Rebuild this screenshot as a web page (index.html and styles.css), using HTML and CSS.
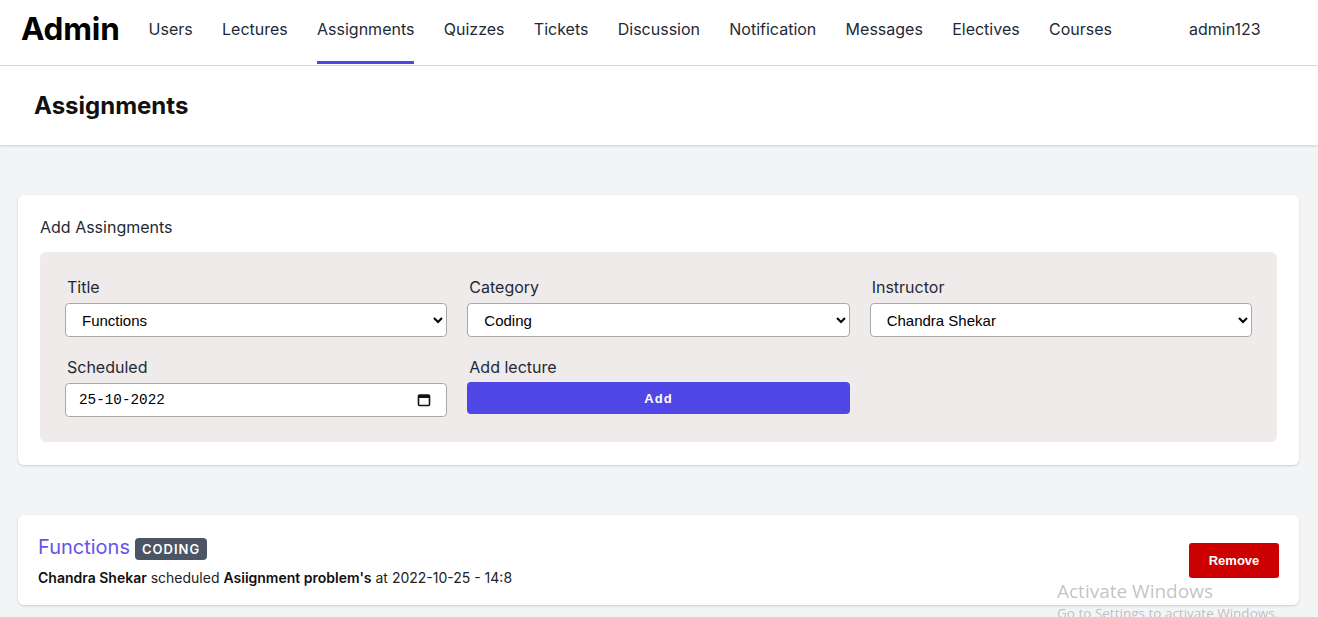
FILE: index.html
```html
<!DOCTYPE html>
<html lang="en">
<head>
<meta charset="utf-8">
<title>Admin - Assignments</title>
<link rel="stylesheet" href="styles.css">
</head>
<body>
<nav class="topnav">
  <div class="brand">Admin</div>
  <ul class="links">
    <li><a href="#">Users</a></li>
    <li><a href="#">Lectures</a></li>
    <li><a href="#" class="active">Assignments</a></li>
    <li><a href="#">Quizzes</a></li>
    <li><a href="#">Tickets</a></li>
    <li><a href="#">Discussion</a></li>
    <li><a href="#">Notification</a></li>
    <li><a href="#">Messages</a></li>
    <li><a href="#">Electives</a></li>
    <li><a href="#">Courses</a></li>
  </ul>
  <div class="user">admin123</div>
</nav>
<header class="page-header">
  <h1>Assignments</h1>
</header>
<main class="content">
  <section class="card add-card">
    <h2 class="card-title">Add Assingments</h2>
    <form class="form-box">
      <div class="field">
        <label>Title</label>
        <select class="control"><option>Functions</option></select>
      </div>
      <div class="field">
        <label>Category</label>
        <select class="control"><option>Coding</option></select>
      </div>
      <div class="field">
        <label>Instructor</label>
        <select class="control"><option>Chandra Shekar</option></select>
      </div>
      <div class="field">
        <label>Scheduled</label>
        <div class="control date">
          <span class="date-text">25-10-2022</span>
          <svg class="cal-icon" width="14" height="14" viewBox="0 0 14 14" aria-hidden="true">
            <rect x="1.5" y="2" width="11" height="10.5" rx="1" fill="none" stroke="#111" stroke-width="1.6"/>
            <rect x="1.5" y="2" width="11" height="3" fill="#111"/>
          </svg>
        </div>
      </div>
      <div class="field">
        <label>Add lecture</label>
        <button type="button" class="btn-add">Add</button>
      </div>
    </form>
  </section>

  <section class="card item-card">
    <div class="item-info">
      <div class="item-title"><span class="item-name">Functions</span><span class="badge">CODING</span></div>
      <p class="item-meta"><b>Chandra Shekar</b> scheduled <b>Asiignment problem's</b> at 2022-10-25 - 14:8</p>
    </div>
    <button type="button" class="btn-remove">Remove</button>
  </section>
</main>
<div class="watermark">
  <div class="wm-big">Activate Windows</div>
  <div class="wm-small">Go to Settings to activate Windows.</div>
</div>
</body>
</html>
```

FILE: styles.css
```css
* { box-sizing: border-box; }
html, body { margin: 0; padding: 0; }
body {
  font-family: Inter, "Noto Sans", sans-serif;
  background: #f3f4f6;
  color: #111827;
  overflow: hidden;
  height: 617px;
}

.topnav {
  display: flex;
  align-items: stretch;
  height: 66px;
  background: #fff;
  border-bottom: 1px solid #dedede;
  padding-left: 21px;
}
.brand {
  font-size: 31.5px;
  font-weight: 700;
  color: #000;
  line-height: 58px;
  letter-spacing: -0.2px;
}
.links {
  display: flex;
  list-style: none;
  margin: 0 0 0 29px;
  padding: 0;
  gap: 29.3px;
}
.links li { display: flex; }
.links a {
  display: block;
  font-size: 16px;
  color: #1f2937;
  text-decoration: none;
  line-height: 58px;
  border-bottom: 3px solid transparent;
  height: 64px;
}
.links a.active { border-bottom-color: #4f46e5; }
.user {
  margin-left: 77px;
  font-size: 16px;
  line-height: 58px;
  color: #1f2937;
}

.page-header {
  background: #fff;
  box-shadow: 0 1px 3px rgba(0,0,0,0.1), 0 1px 2px rgba(0,0,0,0.06);
  padding: 24px 34px;
}
.page-header h1 {
  margin: 0;
  font-size: 24px;
  line-height: 31px;
  font-weight: 700;
  color: #111;
}

.content {
  padding: 50px 19px 0 18px;
}
.card {
  background: #fff;
  border-radius: 6px;
  box-shadow: 0 1px 3px rgba(0,0,0,0.1), 0 1px 2px rgba(0,0,0,0.06);
}
.add-card {
  padding: 20px 22px 23px;
}
.card-title {
  margin: 0 0 13px;
  font-size: 16px;
  font-weight: 400;
  line-height: 24px;
  color: #1f2937;
}
.form-box {
  background: #efebea;
  border-radius: 6px;
  padding: 23px 25px 25px;
  display: grid;
  grid-template-columns: repeat(3, 1fr);
  column-gap: 20px;
  row-gap: 18px;
}
.field { display: flex; flex-direction: column; }
.field label {
  font-size: 16px;
  line-height: 24px;
  color: #1f2937;
  margin-bottom: 4px;
  padding-left: 2px;
}
.control {
  height: 34px;
  border: 1px solid #a9a9a9;
  border-radius: 4px;
  background: #fff;
  font-family: "Liberation Sans", Arial, sans-serif;
  font-size: 15px;
  color: #000;
  padding: 0 6px 0 12px;
}
.date {
  display: flex;
  align-items: center;
  justify-content: space-between;
  font-family: "Liberation Mono", monospace;
  font-size: 14.3px;
  padding-left: 13px;
  padding-right: 15px;
}
.cal-icon { display: block; }
.btn-add {
  height: 32px;
  margin-top: -1px;
  border: 0;
  border-radius: 4px;
  background: #4f46e5;
  color: #fff;
  font-family: "Liberation Sans", Arial, sans-serif;
  font-weight: 700;
  font-size: 13px;
  letter-spacing: 1px;
}

.item-card {
  margin-top: 50px;
  display: flex;
  align-items: flex-start;
  justify-content: space-between;
  padding: 18px 20px 17px;
}
.item-title { display: flex; align-items: center; gap: 5px; height: 28px; }
.item-name {
  font-size: 20px;
  line-height: 28px;
  color: #6654e8;
}
.badge {
  background: #4b5563;
  color: #fff;
  font-size: 13px;
  font-weight: 600;
  letter-spacing: 1px;
  border-radius: 4px;
  padding: 0 7px;
  height: 22px;
  line-height: 22px;
  margin-top: 3px;
}
.item-meta {
  margin: 7px 0 0;
  font-size: 14px;
  line-height: 20px;
  color: #222;
}
.item-meta b { font-weight: 600; color: #111; }
.btn-remove {
  width: 90px;
  height: 35px;
  border: 0;
  border-radius: 3px;
  background: #cc0000;
  color: #fff;
  font-family: "Liberation Sans", Arial, sans-serif;
  font-weight: 700;
  font-size: 13px;
  margin-top: 10px;
}

.watermark {
  position: absolute;
  left: 1057px;
  top: 578px;
  color: rgba(120,120,120,0.45);
  font-family: "Open Sans", "Noto Sans", sans-serif;
  pointer-events: none;
}
.wm-big { font-size: 19px; line-height: 26px; }
.wm-small { font-size: 13.5px; line-height: 18px; }
```
